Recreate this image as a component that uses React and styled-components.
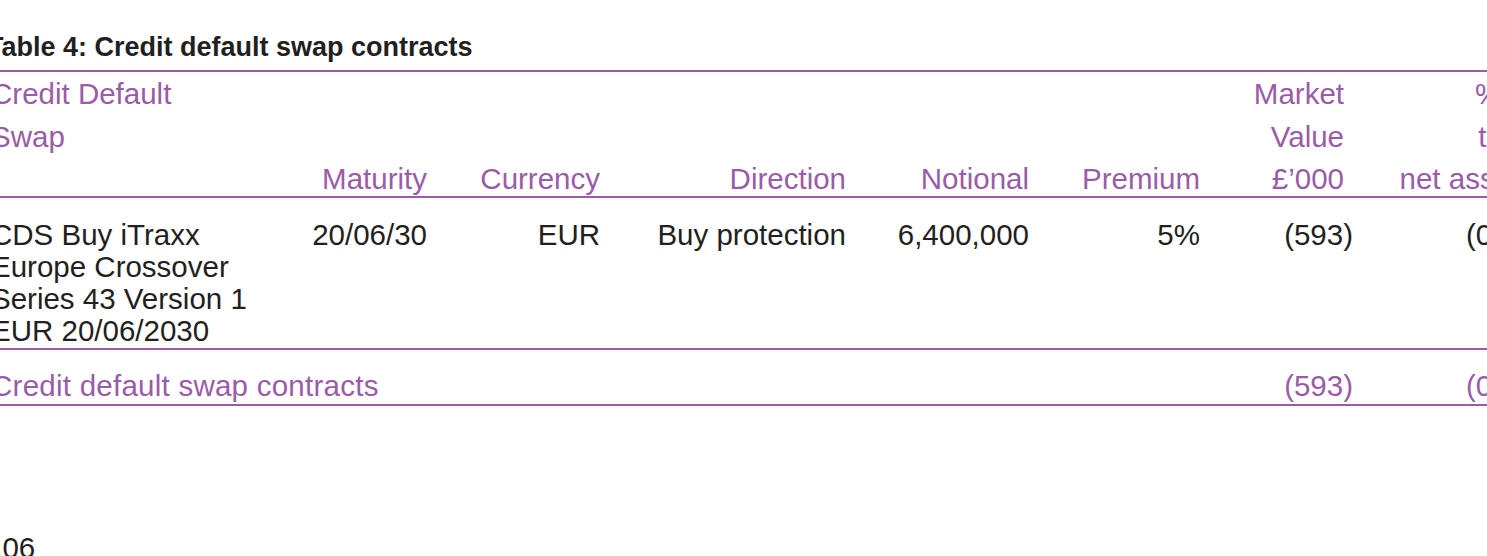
import styled, { createGlobalStyle } from "styled-components";

const purple = "#9a5ca8";
const ink = "#231f20";
const cols = "259px 177px 173px 246px 183px 171px 144px 190px";

const GlobalStyle = createGlobalStyle`
  html, body {
    margin: 0;
    padding: 0;
    background: #fff;
    overflow: hidden;
  }
  body {
    font-family: "Liberation Sans", Arial, sans-serif;
    color: ${ink};
  }
`;

const Page = styled.div`
  width: 1543px;
  margin-left: -9px;
  padding-top: 31px;
  font-size: 29.5px;
`;

const Title = styled.h2`
  margin: 0 0 7px -4px;
  font-size: 27px;
  line-height: 32px;
  font-weight: 700;
  color: ${ink};
`;

const Row = styled.div`
  display: grid;
  grid-template-columns: ${cols};
  border-bottom: 2px solid ${purple};
  ${({ $top }) => $top && `border-top: 2px solid ${purple};`}
  padding: ${({ $pad }) => $pad};
  line-height: ${({ $lh }) => $lh};
  color: ${({ $color }) => $color};
`;

const HeadCell = styled.div`
  text-align: ${({ $left }) => ($left ? "left" : "right")};
  align-self: end;
  margin-bottom: -4.5px;
  white-space: nowrap;
`;

const Cell = styled.div`
  text-align: ${({ $left }) => ($left ? "left" : "right")};
  white-space: nowrap;
  margin-right: ${({ $hang }) => ($hang ? "-9px" : "0")};
  letter-spacing: ${({ $wide }) => ($wide ? "0.25px" : "normal")};
`;

const Folio = styled.div`
  margin-top: 126px;
  line-height: 32px;
  margin-left: -5px;
`;

export default function App() {
  return (
    <>
      <GlobalStyle />
      <Page>
        <Title>Table 4: Credit default swap contracts</Title>
        <Row $top $pad="1px 0 0" $lh="42.5px" $color={purple}>
          <HeadCell $left>
            Credit Default
            <br />
            Swap
            <br />
            &nbsp;
          </HeadCell>
          <HeadCell>Maturity</HeadCell>
          <HeadCell>Currency</HeadCell>
          <HeadCell>Direction</HeadCell>
          <HeadCell>Notional</HeadCell>
          <HeadCell>Premium</HeadCell>
          <HeadCell>
            Market
            <br />
            Value
            <br />
            £’000
          </HeadCell>
          <HeadCell>
            % of
            <br />
            total
            <br />
            net assets
          </HeadCell>
        </Row>
        <Row $pad="21px 0 1px" $lh="32px" $color={ink}>
          <Cell $left>
            CDS Buy iTraxx
            <br />
            Europe Crossover
            <br />
            Series 43 Version 1
            <br />
            EUR 20/06/2030
          </Cell>
          <Cell>20/06/30</Cell>
          <Cell>EUR</Cell>
          <Cell>Buy protection</Cell>
          <Cell>6,400,000</Cell>
          <Cell>5%</Cell>
          <Cell $hang>(593)</Cell>
          <Cell $hang>(0.08)</Cell>
        </Row>
        <Row $pad="20px 0 2px" $lh="32px" $color={purple}>
          <Cell $left $wide>Credit default swap contracts</Cell>
          <Cell />
          <Cell />
          <Cell />
          <Cell />
          <Cell />
          <Cell $hang>(593)</Cell>
          <Cell $hang>(0.08)</Cell>
        </Row>
        <Folio>106</Folio>
      </Page>
    </>
  );
}
